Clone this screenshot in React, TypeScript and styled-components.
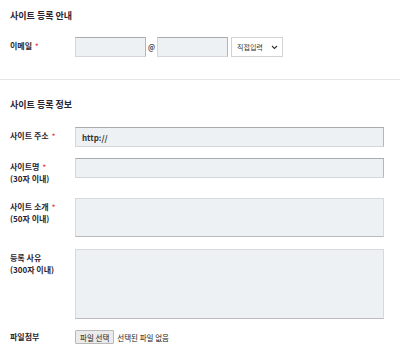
import styled, { createGlobalStyle } from "styled-components";

const GlobalStyle = createGlobalStyle`
  body {
    margin: 0;
    background: #fff;
    font-family: "Noto Sans CJK KR", "Noto Sans", sans-serif;
    color: #2b2b33;
  }
`;

const Page = styled.div`
  width: 400px;
  height: 352px;
  overflow: hidden;
`;

const Section = styled.section<{ $top: number }>`
  padding: ${(p) => p.$top}px 16px 0 10px;
`;

const SectionTitle = styled.h2`
  margin: 0;
  font-size: 9px;
  line-height: 12px;
  font-weight: 700;
  color: #2a2430;
`;

const Divider = styled.hr`
  margin: 0;
  border: 0;
  border-top: 1px solid #e3e5e8;
`;

const Row = styled.div<{ $gap: number }>`
  display: grid;
  grid-template-columns: 65px 1fr;
  align-items: start;
  margin-top: ${(p) => p.$gap}px;
`;

const Label = styled.div<{ $pad?: number }>`
  padding-top: ${(p) => p.$pad ?? 3}px;
  font-size: 8px;
  line-height: 12px;
  font-weight: 700;
  color: #2a2430;
`;

const Req = styled.span`
  color: #e8414f;
  margin-left: 3px;
  font-size: 7px;
`;

const Field = styled.input<{ $w?: number }>`
  box-sizing: border-box;
  width: ${(p) => (p.$w ? `${p.$w}px` : "100%")};
  height: 20px;
  margin: 0;
  padding: 0 6px;
  background: #eef1f4;
  border: 1px solid #d3d6da;
  border-top-color: #a9abae;
  border-right-color: #b4b6b9;
  font-family: inherit;
  font-size: 8px;
  font-weight: 700;
  color: #333;
  outline: none;
`;

const Area = styled.textarea<{ $h: number }>`
  box-sizing: border-box;
  display: block;
  width: 100%;
  height: ${(p) => p.$h}px;
  margin: 0;
  background: #eef1f4;
  border: 1px solid #d7dadd;
  border-bottom-color: #b9bbbe;
  resize: none;
  outline: none;
`;

const EmailLine = styled.div`
  display: flex;
  align-items: center;
`;

const At = styled.span`
  width: 11px;
  text-align: center;
  font-size: 7px;
  font-weight: 700;
  color: #444;
`;

const Select = styled.div`
  box-sizing: border-box;
  margin-left: 3px;
  width: 52px;
  height: 20px;
  display: flex;
  align-items: center;
  justify-content: space-between;
  padding: 0 4px 0 5px;
  border: 1px solid #d0d3d6;
  background: #fff;
  font-size: 7px;
  color: #333;
`;

const FileLine = styled.div`
  display: flex;
  align-items: center;
  height: 14px;
  font-size: 7.5px;
  color: #222;
`;

const FileButton = styled.span`
  box-sizing: border-box;
  height: 14px;
  padding: 0 4px;
  display: flex;
  align-items: center;
  background: #ebebeb;
  border: 1px solid #b9b9b9;
  border-radius: 1px;
  margin-right: 3px;
`;

const Sub = styled.span`
  display: block;
  font-weight: 700;
`;

export default function App() {
  return (
    <Page>
      <GlobalStyle />
      <Section $top={10}>
        <SectionTitle>사이트 등록 안내</SectionTitle>
        <Row $gap={15}>
          <Label $pad={3}>
            이메일<Req>*</Req>
          </Label>
          <EmailLine>
            <Field $w={71} />
            <At>@</At>
            <Field $w={71} />
            <Select>
              <span>직접입력</span>
              <svg width="7" height="5" viewBox="0 0 7 5">
                <path d="M1 1l2.5 2.5L6 1" fill="none" stroke="#333" strokeWidth="1.1" />
              </svg>
            </Select>
          </EmailLine>
        </Row>
      </Section>
      <div style={{ height: 22 }} />
      <Divider />
      <Section $top={19}>
        <SectionTitle>사이트 등록 정보</SectionTitle>
        <Row $gap={16}>
          <Label>
            사이트 주소<Req>*</Req>
          </Label>
          <Field defaultValue="http://" />
        </Row>
        <Row $gap={11}>
          <Label>
            사이트명<Req>*</Req>
            <Sub>(30자 이내)</Sub>
          </Label>
          <Field />
        </Row>
        <Row $gap={13}>
          <Label>
            사이트 소개<Req>*</Req>
            <Sub>(50자 이내)</Sub>
          </Label>
          <Area $h={39} />
        </Row>
        <Row $gap={12}>
          <Label>
            등록 사유
            <Sub>(300자 이내)</Sub>
          </Label>
          <Area $h={70} />
        </Row>
        <Row $gap={11}>
          <Label $pad={1}>파일첨부</Label>
          <FileLine>
            <FileButton>파일 선택</FileButton>
            선택된 파일 없음
          </FileLine>
        </Row>
      </Section>
    </Page>
  );
}
